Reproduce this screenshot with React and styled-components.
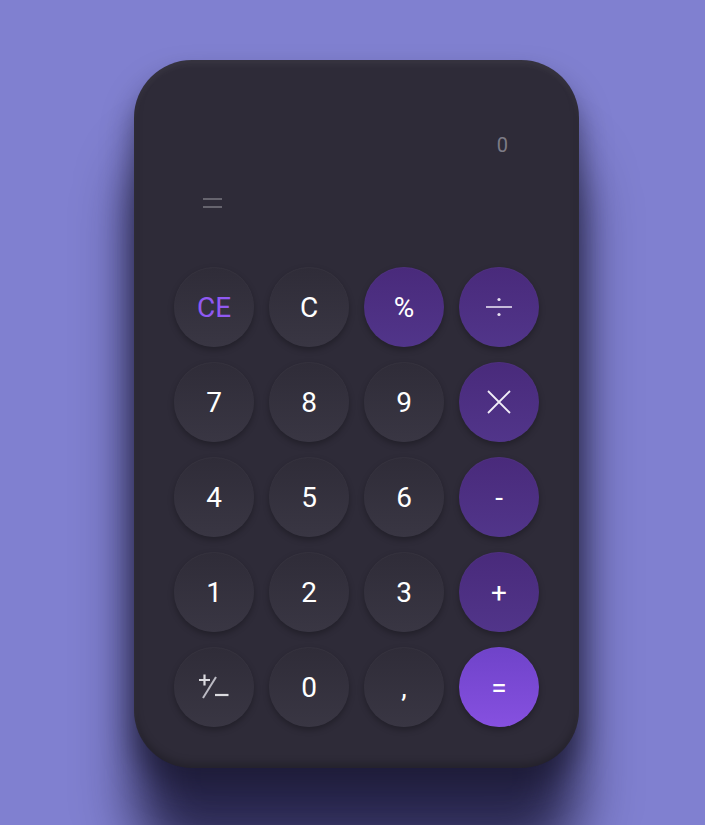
import React, { useState } from "react";
import styled, { createGlobalStyle } from "styled-components";

const GlobalStyle = createGlobalStyle`
  html, body {
    margin: 0;
    padding: 0;
    background: #8080d0;
    font-family: Roboto, "Open Sans", sans-serif;
  }
`;

const Page = styled.div`
  width: 705px;
  height: 825px;
  display: flex;
  padding: 60px 0 0 134px;
  box-sizing: border-box;
  overflow: hidden;
`;

const Card = styled.div`
  width: 445px;
  height: 708px;
  flex-shrink: 0;
  box-sizing: border-box;
  padding: 0 40px 41px;
  border-radius: 58px;
  background: #2e2b38;
  box-shadow: inset 0 4px 6px rgba(255, 255, 255, 0.06),
    inset 0 -4px 8px rgba(0, 0, 0, 0.25),
    0 20px 30px rgba(22, 20, 42, 0.6),
    0 90px 55px rgba(38, 36, 74, 0.95);
  display: flex;
  flex-direction: column;
`;

const Display = styled.div`
  height: 207px;
  padding: 73px 31px 0 29px;
  box-sizing: border-box;
  display: flex;
  flex-direction: column;
`;

const Result = styled.div`
  align-self: flex-end;
  font-size: 20px;
  color: #7d7b86;
  line-height: 24px;
`;

const Equals = styled.div`
  margin-top: 41px;
  width: 19px;
  display: flex;
  flex-direction: column;
  gap: 6px;

  span {
    height: 2px;
    background: #66646e;
  }
`;

const Keys = styled.div`
  display: grid;
  grid-template-columns: repeat(4, 80px);
  grid-auto-rows: 80px;
  gap: 15px;
`;

const Key = styled.button`
  width: 80px;
  height: 80px;
  border: none;
  border-radius: 50%;
  padding: 0;
  display: flex;
  align-items: center;
  justify-content: center;
  font-family: Roboto, "Open Sans", sans-serif;
  font-size: 28px;
  color: ${(p) => (p.$accent ? "#9059f2" : "#ffffff")};
  cursor: pointer;
  background: ${(p) =>
    p.$kind === "op"
      ? "linear-gradient(180deg, #492a7b 0%, #51358a 100%)"
      : p.$kind === "eq"
      ? "linear-gradient(180deg, #6f43c9 0%, #8650e0 100%)"
      : "linear-gradient(180deg, #2f2c38 0%, #393643 100%)"};
  box-shadow: 0 3px 6px rgba(0, 0, 0, 0.28),
    inset 0 1px 1px rgba(255, 255, 255, 0.03);
`;

const Glyph = styled.svg`
  display: block;
`;

const DivideIcon = () => (
  <Glyph width="28" height="28" viewBox="0 0 28 28">
    <line x1="1" y1="14" x2="27" y2="14" stroke="#e6e0f0" strokeWidth="1.6" />
    <circle cx="14" cy="6.5" r="1.6" fill="#e6e0f0" />
    <circle cx="14" cy="21.5" r="1.6" fill="#e6e0f0" />
  </Glyph>
);

const TimesIcon = () => (
  <Glyph width="24" height="24" viewBox="0 0 24 24">
    <path d="M1 1L23 23M23 1L1 23" stroke="#f2eef8" strokeWidth="1.8" />
  </Glyph>
);

const SignIcon = () => (
  <Glyph width="30" height="30" viewBox="0 0 30 30">
    <g stroke="#dcdbe0" strokeWidth="2.2" fill="none">
      <path d="M0 8H11M5.5 2.5V13.5" />
      <path d="M4 26L17 5" strokeWidth="2" stroke="#bcbbc4" />
      <path d="M16 23H29.5" />
    </g>
  </Glyph>
);

const keys = [
  { label: "CE", accent: true },
  { label: "C" },
  { label: "%", kind: "op" },
  { label: <DivideIcon />, kind: "op" },
  { label: "7" },
  { label: "8" },
  { label: "9" },
  { label: <TimesIcon />, kind: "op" },
  { label: "4" },
  { label: "5" },
  { label: "6" },
  { label: "-", kind: "op" },
  { label: "1" },
  { label: "2" },
  { label: "3" },
  { label: "+", kind: "op" },
  { label: <SignIcon /> },
  { label: "0" },
  { label: "," },
  { label: "=", kind: "eq" },
];

export default function App() {
  const [value] = useState(0);

  return (
    <>
      <GlobalStyle />
      <Page>
        <Card>
          <Display>
            <Result>{value}</Result>
            <Equals>
              <span />
              <span />
            </Equals>
          </Display>
          <Keys>
            {keys.map((k, i) => (
              <Key key={i} $kind={k.kind} $accent={k.accent}>
                {k.label}
              </Key>
            ))}
          </Keys>
        </Card>
      </Page>
    </>
  );
}
